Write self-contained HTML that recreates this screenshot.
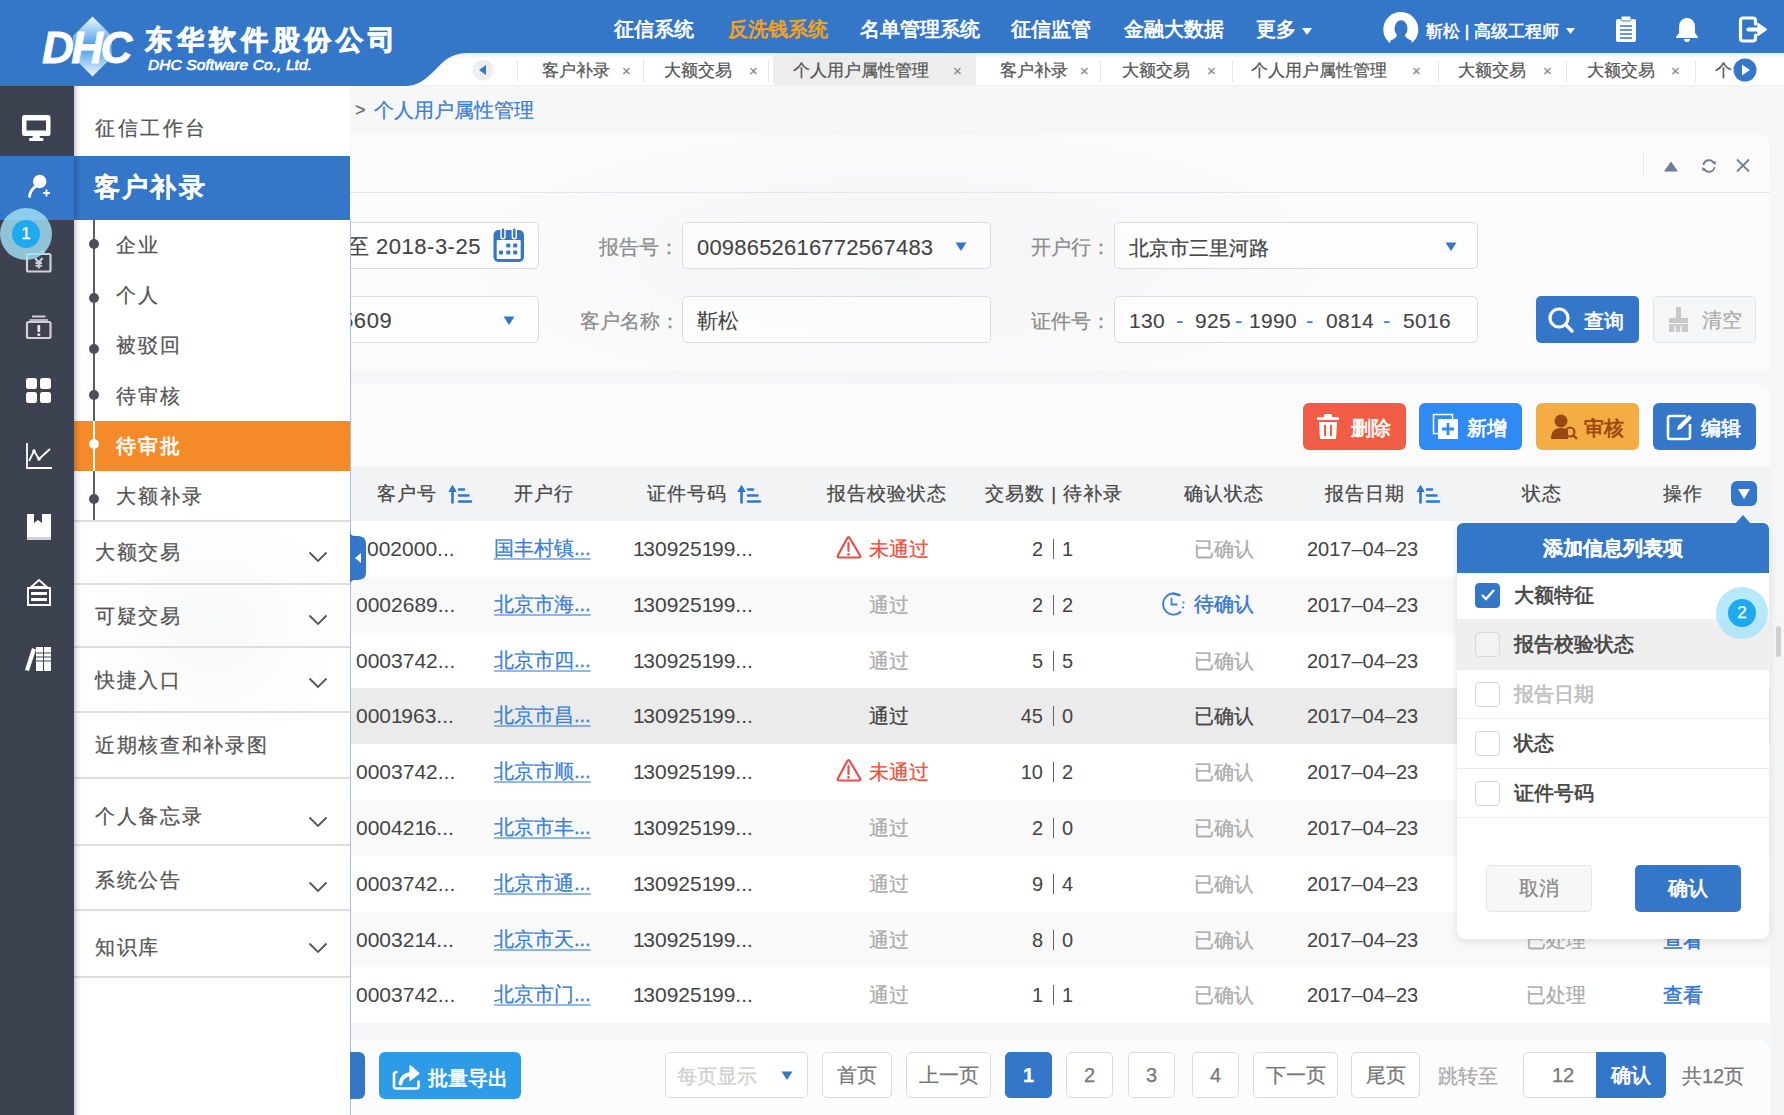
<!DOCTYPE html><html><head><meta charset="utf-8"><style>
*{box-sizing:border-box;margin:0;padding:0}
html,body{width:1784px;height:1115px;overflow:hidden}
body{font-family:"Liberation Sans",sans-serif;background:#f4f5f7;position:relative;color:#4a4a4a;-webkit-text-stroke:0.25px currentColor}
.a{position:absolute;white-space:nowrap}
.nav{top:17px;font-size:20px;color:#fff;line-height:24px;-webkit-text-stroke:0.75px currentColor}
.tab{top:60px;font-size:17px;color:#555;line-height:22px}
.tx{top:60px;font-size:15px;color:#8a8a8a;line-height:22px}
.tsep{top:60px;width:1px;height:22px;background:#e8e8e8}
.mi{font-size:20px;color:#555;line-height:24px;letter-spacing:1.7px}
.msep{left:74px;width:276px;height:2px;background:#dedede}
.sub{font-size:20px;color:#555;line-height:24px;letter-spacing:2px}
.dot{left:89px;width:10px;height:10px;border-radius:5px;background:#4b4f5a}
.chev{left:308px}
.lbl{font-size:20px;color:#8c8c8c;line-height:24px}
.inp{background:rgba(255,255,255,0.6);border:1px solid #dcdcdc;border-radius:5px;height:47px}
.val{font-size:22px;color:#444;line-height:26px;-webkit-text-stroke:0.1px}
.th{top:482px;font-size:19px;color:#474747;line-height:24px;letter-spacing:1px}
.td{font-size:21px;color:#444;line-height:26px;-webkit-text-stroke:0}
.lnk{font-size:20px;color:#3a7fd5;line-height:24px;text-decoration:underline;text-decoration-color:rgba(58,127,213,0.55);text-underline-offset:3px}
.gr{font-size:20px;color:#ababab;line-height:24px}
.btn{top:403px;height:47px;border-radius:6px;color:#fff;font-size:20px;font-weight:bold;line-height:47px}
.pg{top:1052px;height:46px;border:1px solid #dcdcdc;border-radius:5px;background:#fff;font-size:20px;color:#777;line-height:44px;text-align:center}
.pi{font-size:20px;color:#555;line-height:24px;-webkit-text-stroke:0.6px currentColor}
.cb{left:1475px;width:25px;height:25px;border:1px solid #d8d8d8;border-radius:4px;background:#fff}
.psep{left:1457px;width:312px;height:1px;background:#ececec}
</style></head><body>
<div class="a" style="left:350px;top:87px;width:1434px;height:1028px;background:linear-gradient(180deg,#f7f7f8,#f3f4f6)"></div>
<div class="a" style="left:350px;top:135px;width:1420px;height:236px;background:#fbfbfc;border-radius:0 9px 9px 0;box-shadow:0 0 2px rgba(0,0,0,0.03)"></div>
<div class="a" style="left:450px;top:120px;width:900px;height:280px;background:radial-gradient(closest-side,rgba(90,100,120,0.045),rgba(90,100,120,0))"></div>
<div class="a" style="left:350px;top:192px;width:1420px;height:1px;background:#e6e7ea"></div>
<div class="a" style="left:350px;top:385px;width:1420px;height:655px;background:#fbfbfc;border-radius:0 9px 0 0"></div>
<div class="a" style="left:350px;top:1040px;width:1420px;height:75px;background:#fcfcfd;border-radius:0 9px 0 0"></div>
<div class="a" style="left:355px;top:98px;font-size:18px;color:#666;line-height:24px">&gt;</div>
<div class="a" style="left:374px;top:97px;font-size:20px;color:#3a7fd5;line-height:26px">个人用户属性管理</div>
<div class="a" style="left:1643px;top:152px;width:1px;height:24px;background:#e6e6e6"></div>
<svg class="a" style="left:1663px;top:160px" width="16" height="13"><path d="M1 11.5H15L8 1.5Z" fill="#6f7e94"/></svg>
<svg class="a" style="left:1700px;top:157px" width="18" height="18"><path d="M3.5 8A5.5 5.5 0 0 1 14 6.5M14.5 10A5.5 5.5 0 0 1 4 11.5" fill="none" stroke="#6f7e94" stroke-width="1.8"/><path d="M12 5.5L15.5 8L16 4Z" fill="#6f7e94"/><path d="M6 12.5L2.5 10L2 14Z" fill="#6f7e94"/></svg>
<svg class="a" style="left:1735px;top:158px" width="16" height="15"><path d="M2 1.5L14 13.5M14 1.5L2 13.5" stroke="#6f7e94" stroke-width="1.8"/></svg>
<div class="a inp" style="left:300px;top:222px;width:239px"></div>
<div class="a inp" style="left:682px;top:222px;width:309px"></div>
<div class="a inp" style="left:1114px;top:222px;width:364px"></div>
<div class="a inp" style="left:300px;top:296px;width:239px"></div>
<div class="a inp" style="left:682px;top:296px;width:309px"></div>
<div class="a inp" style="left:1114px;top:296px;width:364px"></div>
<div class="a val" style="left:347px;top:234px;letter-spacing:0.5px">至 2018-3-25</div>
<svg class="a" style="left:493px;top:227px" width="32" height="36"><rect x="0.5" y="3" width="30.5" height="32" rx="5" fill="#3476c8"/><rect x="3.7" y="13" width="24" height="19" rx="1" fill="#fbfbfc"/><rect x="7.3" y="0.5" width="5.4" height="12" rx="2.7" fill="#fbfbfc"/><rect x="18.6" y="0.5" width="5.4" height="12" rx="2.7" fill="#fbfbfc"/><rect x="8.8" y="1.5" width="2.4" height="9.5" rx="1.2" fill="#3476c8"/><rect x="20.1" y="1.5" width="2.4" height="9.5" rx="1.2" fill="#3476c8"/><rect x="13.3" y="16.6" width="4" height="4" rx="1" fill="#3476c8"/><rect x="20.2" y="16.6" width="4" height="4" rx="1" fill="#3476c8"/><rect x="6" y="23.5" width="4" height="4" rx="1" fill="#3476c8"/><rect x="13.3" y="23.5" width="4" height="4" rx="1" fill="#3476c8"/><rect x="20.2" y="23.5" width="4" height="4" rx="1" fill="#3476c8"/></svg>
<div class="a val" style="left:341px;top:308px;letter-spacing:0.6px">5609</div>
<svg class="a" style="left:503px;top:316px" width="12" height="10"><path d="M0.5 0.5H11.5L6 9Z" fill="#3476c8"/></svg>
<div class="a lbl" style="left:599px;top:235px">报告号：</div>
<div class="a val" style="left:697px;top:235px;letter-spacing:0.2px">0098652616772567483</div>
<svg class="a" style="left:955px;top:242px" width="12" height="10"><path d="M0.5 0.5H11.5L6 9Z" fill="#3476c8"/></svg>
<div class="a lbl" style="left:1031px;top:235px">开户行：</div>
<div class="a val" style="left:1129px;top:235px;font-size:20px;-webkit-text-stroke:0.25px">北京市三里河路</div>
<svg class="a" style="left:1445px;top:242px" width="12" height="10"><path d="M0.5 0.5H11.5L6 9Z" fill="#3476c8"/></svg>
<div class="a lbl" style="left:580px;top:309px">客户名称：</div>
<div class="a val" style="left:697px;top:308px;font-size:21px">靳松</div>
<div class="a lbl" style="left:1031px;top:309px">证件号：</div>
<div class="a val" style="left:1129px;top:308px;font-size:21px;letter-spacing:0.3px">130</div>
<div class="a val" style="left:1195px;top:308px;font-size:21px;letter-spacing:0.3px">925</div>
<div class="a val" style="left:1249px;top:308px;font-size:21px;letter-spacing:0.3px">1990</div>
<div class="a val" style="left:1326px;top:308px;font-size:21px;letter-spacing:0.3px">0814</div>
<div class="a val" style="left:1403px;top:308px;font-size:21px;letter-spacing:0.3px">5016</div>
<div class="a val" style="left:1176px;top:308px;color:#3a7fd5">-</div>
<div class="a val" style="left:1235px;top:308px;color:#3a7fd5">-</div>
<div class="a val" style="left:1306px;top:308px;color:#3a7fd5">-</div>
<div class="a val" style="left:1383px;top:308px;color:#3a7fd5">-</div>
<div class="a" style="left:1536px;top:296px;width:103px;height:47px;border-radius:5px;background:#3476c8"></div>
<svg class="a" style="left:1547px;top:306px" width="28" height="28"><circle cx="12" cy="12" r="9" fill="none" stroke="#fff" stroke-width="3.2"/><path d="M18.5 18.5L25 25" stroke="#fff" stroke-width="3.5" stroke-linecap="round"/></svg>
<div class="a" style="left:1584px;top:308px;font-size:20px;color:#fff;line-height:26px;-webkit-text-stroke:0.7px #fff">查询</div>
<div class="a" style="left:1653px;top:296px;width:103px;height:47px;border-radius:5px;background:#f5f6f8;border:1px solid #e2e3e6"></div>
<svg class="a" style="left:1667px;top:306px" width="24" height="28"><rect x="9" y="1" width="5" height="11" fill="#c8c8c8"/><rect x="2" y="12" width="19" height="5" fill="#c8c8c8"/><path d="M2 18H21V26H2Z" fill="#c8c8c8"/><path d="M8 20V26M14 20V26" stroke="#f5f6f8" stroke-width="1.5"/></svg>
<div class="a" style="left:1702px;top:307px;font-size:20px;color:#aaa;line-height:26px">清空</div>
<div class="a btn" style="left:1303px;width:103px;background:#f15c45"></div>
<div class="a" style="left:1351px;top:415px;font-size:20px;color:#fff;line-height:26px;-webkit-text-stroke:0.7px #fff">删除</div>
<div class="a btn" style="left:1419px;width:103px;background:#2f8bf3"></div>
<div class="a" style="left:1467px;top:415px;font-size:20px;color:#fff;line-height:26px;-webkit-text-stroke:0.7px #fff">新增</div>
<div class="a btn" style="left:1536px;width:103px;background:#f4ad42"></div>
<div class="a" style="left:1584px;top:415px;font-size:20px;color:#9b4711;line-height:26px;-webkit-text-stroke:0.7px #9b4711">审核</div>
<div class="a btn" style="left:1653px;width:103px;background:#3476c8"></div>
<div class="a" style="left:1701px;top:415px;font-size:20px;color:#fff;line-height:26px;-webkit-text-stroke:0.7px #fff">编辑</div>
<svg class="a" style="left:1316px;top:414px" width="24" height="26"><rect x="1" y="3" width="22" height="3" rx="1" fill="#fff"/><rect x="8" y="0" width="8" height="4" rx="1" fill="#fff"/><path d="M3 8H21L20 25H4Z" fill="#fff"/><path d="M9 11V22M15 11V22" stroke="#f15c45" stroke-width="2"/></svg>
<svg class="a" style="left:1432px;top:413px" width="28" height="28"><rect x="1.5" y="1.5" width="19" height="19" fill="none" stroke="#fff" stroke-width="1.5"/><rect x="6" y="6" width="20" height="20" fill="#fff"/><path d="M16 10V22M10 16H22" stroke="#2f8bf3" stroke-width="2.8"/></svg>
<svg class="a" style="left:1550px;top:413px" width="30" height="28"><circle cx="11" cy="8" r="6.5" fill="#9b4711"/><path d="M1 26C1 18 5 15 11 15C15 15 17 16 18 17V26Z" fill="#9b4711"/><circle cx="20" cy="19" r="4.5" fill="none" stroke="#9b4711" stroke-width="2.2"/><path d="M23 22L27 26" stroke="#9b4711" stroke-width="2.4"/></svg>
<svg class="a" style="left:1666px;top:413px" width="28" height="28"><path d="M20 3H4A2 2 0 0 0 2 5V24A2 2 0 0 0 4 26H22A2 2 0 0 0 24 24V11" fill="none" stroke="#fff" stroke-width="2.6"/><path d="M11 17L12 13L23 2L26 5L15 16Z" fill="#fff"/></svg>
<div class="a" style="left:350px;top:467px;width:1420px;height:54px;background:#f2f3f4"></div>
<div class="a th" style="left:377px">客户号</div>
<div class="a th" style="left:514px">开户行</div>
<div class="a th" style="left:647px">证件号码</div>
<div class="a th" style="left:827px">报告校验状态</div>
<div class="a th" style="left:985px">交易数 | 待补录</div>
<div class="a th" style="left:1184px">确认状态</div>
<div class="a th" style="left:1325px">报告日期</div>
<div class="a th" style="left:1522px">状态</div>
<div class="a th" style="left:1663px">操作</div>
<svg class="a" style="left:448px;top:484px" width="26" height="22"><path d="M4.5 4V18.5" stroke="#2f78d2" stroke-width="2.6" stroke-linecap="round"/><path d="M1 7.5L4.5 1.5L8 7.5Z" fill="#2f78d2" stroke="#2f78d2" stroke-width="1" stroke-linejoin="round"/><path d="M11 5.5H16M11 11.5H20.5M11 17.5H23" stroke="#2f78d2" stroke-width="2.6" stroke-linecap="round"/></svg>
<svg class="a" style="left:737px;top:484px" width="26" height="22"><path d="M4.5 4V18.5" stroke="#2f78d2" stroke-width="2.6" stroke-linecap="round"/><path d="M1 7.5L4.5 1.5L8 7.5Z" fill="#2f78d2" stroke="#2f78d2" stroke-width="1" stroke-linejoin="round"/><path d="M11 5.5H16M11 11.5H20.5M11 17.5H23" stroke="#2f78d2" stroke-width="2.6" stroke-linecap="round"/></svg>
<svg class="a" style="left:1416px;top:484px" width="26" height="22"><path d="M4.5 4V18.5" stroke="#2f78d2" stroke-width="2.6" stroke-linecap="round"/><path d="M1 7.5L4.5 1.5L8 7.5Z" fill="#2f78d2" stroke="#2f78d2" stroke-width="1" stroke-linejoin="round"/><path d="M11 5.5H16M11 11.5H20.5M11 17.5H23" stroke="#2f78d2" stroke-width="2.6" stroke-linecap="round"/></svg>
<div class="a" style="left:1731px;top:481px;width:26px;height:25px;border-radius:6px;background:#3476c8"></div>
<svg class="a" style="left:1737px;top:488px" width="14" height="12"><path d="M1 1H13L7 11Z" fill="#fff"/></svg>
<div class="a" style="left:350px;top:521.0px;width:1420px;height:56.1px;background:#ffffff"></div>
<div class="a td" style="left:367px;top:535.9px">002000...</div>
<div class="a lnk" style="left:494px;top:535.9px">国丰村镇...</div>
<div class="a td" style="left:633px;top:535.9px"><span style="letter-spacing:-1.4px">1</span>30925<span style="letter-spacing:-1.4px">1</span>99...</div>
<svg class="a" style="left:835px;top:533.9px" width="28" height="26"><path d="M12.2 4.2Q13.5 2 14.8 4.2L25 21.2Q26.2 23.5 23.6 23.5H4.4Q1.8 23.5 3 21.2Z" fill="none" stroke="#e5504a" stroke-width="2.2" stroke-linejoin="round"/><path d="M13.5 9V17" stroke="#e5504a" stroke-width="2.2" stroke-linecap="round"/><circle cx="13.5" cy="20.4" r="1.3" fill="#e5504a"/></svg>
<div class="a" style="left:869px;top:535.9px;font-size:20px;color:#f04e3a;line-height:26px">未通过</div>
<div class="a td" style="left:963px;top:535.9px;width:80px;text-align:right;font-size:20px">2</div>
<div class="a" style="left:1052.5px;top:538.9px;width:1.6px;height:20px;background:#666"></div>
<div class="a td" style="left:1062px;top:535.9px;font-size:20px">1</div>
<div class="a" style="left:1194px;top:535.9px;font-size:20px;color:#ababab;line-height:26px">已确认</div>
<div class="a td" style="left:1307px;top:535.9px;font-size:20px">2017–04–23</div>
<div class="a" style="left:1526px;top:535.9px;font-size:20px;color:#ababab;line-height:26px">已处理</div>
<div class="a" style="left:1663px;top:535.9px;font-size:20px;color:#3576d0;line-height:26px;-webkit-text-stroke:0.5px #3576d0">查看</div>
<div class="a" style="left:350px;top:576.8px;width:1420px;height:56.1px;background:#f9f9fa"></div>
<div class="a td" style="left:356px;top:591.7px">0002689...</div>
<div class="a lnk" style="left:494px;top:591.7px">北京市海...</div>
<div class="a td" style="left:633px;top:591.7px"><span style="letter-spacing:-1.4px">1</span>30925<span style="letter-spacing:-1.4px">1</span>99...</div>
<div class="a" style="left:869px;top:591.7px;font-size:20px;color:#ababab;line-height:26px">通过</div>
<div class="a td" style="left:963px;top:591.7px;width:80px;text-align:right;font-size:20px">2</div>
<div class="a" style="left:1052.5px;top:594.7px;width:1.6px;height:20px;background:#666"></div>
<div class="a td" style="left:1062px;top:591.7px;font-size:20px">2</div>
<svg class="a" style="left:1160px;top:590.7px" width="26" height="26"><path d="M13.5 2.5A10.5 10.5 0 1 0 21 20.5" fill="none" stroke="#3a7fd5" stroke-width="1.8"/><path d="M13.5 2.5L19.5 4.2" stroke="#3a7fd5" stroke-width="2.4" stroke-linecap="round"/><path d="M11.5 7V13.5H17.5" fill="none" stroke="#3a7fd5" stroke-width="1.8"/><circle cx="23.5" cy="11.5" r="1.1" fill="#3a7fd5"/><circle cx="23" cy="16.5" r="1.1" fill="#3a7fd5"/></svg>
<div class="a" style="left:1194px;top:590.7px;font-size:20px;color:#3576d0;line-height:26px;-webkit-text-stroke:0.4px #3576d0">待确认</div>
<div class="a td" style="left:1307px;top:591.7px;font-size:20px">2017–04–23</div>
<div class="a" style="left:1526px;top:591.7px;font-size:20px;color:#ababab;line-height:26px">已处理</div>
<div class="a" style="left:1663px;top:591.7px;font-size:20px;color:#3576d0;line-height:26px;-webkit-text-stroke:0.5px #3576d0">查看</div>
<div class="a" style="left:350px;top:632.6px;width:1420px;height:56.1px;background:#ffffff"></div>
<div class="a td" style="left:356px;top:647.5px">0003742...</div>
<div class="a lnk" style="left:494px;top:647.5px">北京市四...</div>
<div class="a td" style="left:633px;top:647.5px"><span style="letter-spacing:-1.4px">1</span>30925<span style="letter-spacing:-1.4px">1</span>99...</div>
<div class="a" style="left:869px;top:647.5px;font-size:20px;color:#ababab;line-height:26px">通过</div>
<div class="a td" style="left:963px;top:647.5px;width:80px;text-align:right;font-size:20px">5</div>
<div class="a" style="left:1052.5px;top:650.5px;width:1.6px;height:20px;background:#666"></div>
<div class="a td" style="left:1062px;top:647.5px;font-size:20px">5</div>
<div class="a" style="left:1194px;top:647.5px;font-size:20px;color:#ababab;line-height:26px">已确认</div>
<div class="a td" style="left:1307px;top:647.5px;font-size:20px">2017–04–23</div>
<div class="a" style="left:1526px;top:647.5px;font-size:20px;color:#ababab;line-height:26px">已处理</div>
<div class="a" style="left:1663px;top:647.5px;font-size:20px;color:#3576d0;line-height:26px;-webkit-text-stroke:0.5px #3576d0">查看</div>
<div class="a" style="left:350px;top:688.4px;width:1420px;height:56.1px;background:#ebebeb"></div>
<div class="a td" style="left:356px;top:703.3px">000<span style="letter-spacing:-1.4px">1</span>963...</div>
<div class="a lnk" style="left:494px;top:703.3px">北京市昌...</div>
<div class="a td" style="left:633px;top:703.3px"><span style="letter-spacing:-1.4px">1</span>30925<span style="letter-spacing:-1.4px">1</span>99...</div>
<div class="a" style="left:869px;top:703.3px;font-size:20px;color:#444;line-height:26px">通过</div>
<div class="a td" style="left:963px;top:703.3px;width:80px;text-align:right;font-size:20px">45</div>
<div class="a" style="left:1052.5px;top:706.3px;width:1.6px;height:20px;background:#666"></div>
<div class="a td" style="left:1062px;top:703.3px;font-size:20px">0</div>
<div class="a" style="left:1194px;top:703.3px;font-size:20px;color:#444;line-height:26px">已确认</div>
<div class="a td" style="left:1307px;top:703.3px;font-size:20px">2017–04–23</div>
<div class="a" style="left:1526px;top:703.3px;font-size:20px;color:#ababab;line-height:26px">已处理</div>
<div class="a" style="left:1663px;top:703.3px;font-size:20px;color:#3576d0;line-height:26px;-webkit-text-stroke:0.5px #3576d0">查看</div>
<div class="a" style="left:350px;top:744.2px;width:1420px;height:56.1px;background:#ffffff"></div>
<div class="a td" style="left:356px;top:759.1px">0003742...</div>
<div class="a lnk" style="left:494px;top:759.1px">北京市顺...</div>
<div class="a td" style="left:633px;top:759.1px"><span style="letter-spacing:-1.4px">1</span>30925<span style="letter-spacing:-1.4px">1</span>99...</div>
<svg class="a" style="left:835px;top:757.1px" width="28" height="26"><path d="M12.2 4.2Q13.5 2 14.8 4.2L25 21.2Q26.2 23.5 23.6 23.5H4.4Q1.8 23.5 3 21.2Z" fill="none" stroke="#e5504a" stroke-width="2.2" stroke-linejoin="round"/><path d="M13.5 9V17" stroke="#e5504a" stroke-width="2.2" stroke-linecap="round"/><circle cx="13.5" cy="20.4" r="1.3" fill="#e5504a"/></svg>
<div class="a" style="left:869px;top:759.1px;font-size:20px;color:#f04e3a;line-height:26px">未通过</div>
<div class="a td" style="left:963px;top:759.1px;width:80px;text-align:right;font-size:20px">10</div>
<div class="a" style="left:1052.5px;top:762.1px;width:1.6px;height:20px;background:#666"></div>
<div class="a td" style="left:1062px;top:759.1px;font-size:20px">2</div>
<div class="a" style="left:1194px;top:759.1px;font-size:20px;color:#ababab;line-height:26px">已确认</div>
<div class="a td" style="left:1307px;top:759.1px;font-size:20px">2017–04–23</div>
<div class="a" style="left:1526px;top:759.1px;font-size:20px;color:#ababab;line-height:26px">已处理</div>
<div class="a" style="left:1663px;top:759.1px;font-size:20px;color:#3576d0;line-height:26px;-webkit-text-stroke:0.5px #3576d0">查看</div>
<div class="a" style="left:350px;top:800.0px;width:1420px;height:56.1px;background:#f9f9fa"></div>
<div class="a td" style="left:356px;top:814.9px">00042<span style="letter-spacing:-1.4px">1</span>6...</div>
<div class="a lnk" style="left:494px;top:814.9px">北京市丰...</div>
<div class="a td" style="left:633px;top:814.9px"><span style="letter-spacing:-1.4px">1</span>30925<span style="letter-spacing:-1.4px">1</span>99...</div>
<div class="a" style="left:869px;top:814.9px;font-size:20px;color:#ababab;line-height:26px">通过</div>
<div class="a td" style="left:963px;top:814.9px;width:80px;text-align:right;font-size:20px">2</div>
<div class="a" style="left:1052.5px;top:817.9px;width:1.6px;height:20px;background:#666"></div>
<div class="a td" style="left:1062px;top:814.9px;font-size:20px">0</div>
<div class="a" style="left:1194px;top:814.9px;font-size:20px;color:#ababab;line-height:26px">已确认</div>
<div class="a td" style="left:1307px;top:814.9px;font-size:20px">2017–04–23</div>
<div class="a" style="left:1526px;top:814.9px;font-size:20px;color:#ababab;line-height:26px">已处理</div>
<div class="a" style="left:1663px;top:814.9px;font-size:20px;color:#3576d0;line-height:26px;-webkit-text-stroke:0.5px #3576d0">查看</div>
<div class="a" style="left:350px;top:855.8px;width:1420px;height:56.1px;background:#ffffff"></div>
<div class="a td" style="left:356px;top:870.7px">0003742...</div>
<div class="a lnk" style="left:494px;top:870.7px">北京市通...</div>
<div class="a td" style="left:633px;top:870.7px"><span style="letter-spacing:-1.4px">1</span>30925<span style="letter-spacing:-1.4px">1</span>99...</div>
<div class="a" style="left:869px;top:870.7px;font-size:20px;color:#ababab;line-height:26px">通过</div>
<div class="a td" style="left:963px;top:870.7px;width:80px;text-align:right;font-size:20px">9</div>
<div class="a" style="left:1052.5px;top:873.7px;width:1.6px;height:20px;background:#666"></div>
<div class="a td" style="left:1062px;top:870.7px;font-size:20px">4</div>
<div class="a" style="left:1194px;top:870.7px;font-size:20px;color:#ababab;line-height:26px">已确认</div>
<div class="a td" style="left:1307px;top:870.7px;font-size:20px">2017–04–23</div>
<div class="a" style="left:1526px;top:870.7px;font-size:20px;color:#ababab;line-height:26px">已处理</div>
<div class="a" style="left:1663px;top:870.7px;font-size:20px;color:#3576d0;line-height:26px;-webkit-text-stroke:0.5px #3576d0">查看</div>
<div class="a" style="left:350px;top:911.6px;width:1420px;height:56.1px;background:#f9f9fa"></div>
<div class="a td" style="left:356px;top:926.5px">00032<span style="letter-spacing:-1.4px">1</span>4...</div>
<div class="a lnk" style="left:494px;top:926.5px">北京市天...</div>
<div class="a td" style="left:633px;top:926.5px"><span style="letter-spacing:-1.4px">1</span>30925<span style="letter-spacing:-1.4px">1</span>99...</div>
<div class="a" style="left:869px;top:926.5px;font-size:20px;color:#ababab;line-height:26px">通过</div>
<div class="a td" style="left:963px;top:926.5px;width:80px;text-align:right;font-size:20px">8</div>
<div class="a" style="left:1052.5px;top:929.5px;width:1.6px;height:20px;background:#666"></div>
<div class="a td" style="left:1062px;top:926.5px;font-size:20px">0</div>
<div class="a" style="left:1194px;top:926.5px;font-size:20px;color:#ababab;line-height:26px">已确认</div>
<div class="a td" style="left:1307px;top:926.5px;font-size:20px">2017–04–23</div>
<div class="a" style="left:1526px;top:926.5px;font-size:20px;color:#ababab;line-height:26px">已处理</div>
<div class="a" style="left:1663px;top:926.5px;font-size:20px;color:#3576d0;line-height:26px;-webkit-text-stroke:0.5px #3576d0">查看</div>
<div class="a" style="left:350px;top:967.4px;width:1420px;height:56.1px;background:#ffffff"></div>
<div class="a td" style="left:356px;top:982.3px">0003742...</div>
<div class="a lnk" style="left:494px;top:982.3px">北京市门...</div>
<div class="a td" style="left:633px;top:982.3px"><span style="letter-spacing:-1.4px">1</span>30925<span style="letter-spacing:-1.4px">1</span>99...</div>
<div class="a" style="left:869px;top:982.3px;font-size:20px;color:#ababab;line-height:26px">通过</div>
<div class="a td" style="left:963px;top:982.3px;width:80px;text-align:right;font-size:20px">1</div>
<div class="a" style="left:1052.5px;top:985.3px;width:1.6px;height:20px;background:#666"></div>
<div class="a td" style="left:1062px;top:982.3px;font-size:20px">1</div>
<div class="a" style="left:1194px;top:982.3px;font-size:20px;color:#ababab;line-height:26px">已确认</div>
<div class="a td" style="left:1307px;top:982.3px;font-size:20px">2017–04–23</div>
<div class="a" style="left:1526px;top:982.3px;font-size:20px;color:#ababab;line-height:26px">已处理</div>
<div class="a" style="left:1663px;top:982.3px;font-size:20px;color:#3576d0;line-height:26px;-webkit-text-stroke:0.5px #3576d0">查看</div>
<div class="a" style="left:350px;top:1023px;width:1420px;height:17px;background:#f6f7f9"></div>
<div class="a" style="left:350px;top:220px;width:1px;height:895px;background:#9fc0ea"></div>
<svg class="a" style="left:350px;top:530px" width="18" height="56"><path d="M0 0C0 5 2 6 6 6C13 6 16 8 16 14V42C16 48 13 50 6 50C2 50 0 51 0 56Z" fill="#3476c8"/><path d="M11 23V33L5 28Z" fill="#fff"/></svg>
<div class="a" style="left:330px;top:1052px;width:35px;height:47px;border-radius:6px;background:#3476c8"></div>
<div class="a" style="left:379px;top:1052px;width:142px;height:47px;border-radius:6px;background:#2d9be6"></div>
<svg class="a" style="left:391px;top:1062px" width="30" height="30"><path d="M5.5 10Q3 10 3 12.5V24.5Q3 26.5 5 26.5H25.5Q27.5 26.5 27.5 24.5V19.5" fill="none" stroke="#fff" stroke-width="2.6" stroke-linecap="round"/><path d="M9.5 21.5C10.5 15.5 14 12.3 20 12" fill="none" stroke="#fff" stroke-width="4" stroke-linecap="round"/><path d="M19 3.5L28 11.5L19 18.5Z" fill="#fff" stroke="#fff" stroke-width="1.2" stroke-linejoin="round"/></svg>
<div class="a" style="left:428px;top:1065px;font-size:20px;color:#fff;line-height:26px;-webkit-text-stroke:0.7px #fff">批量导出</div>
<div class="a pg" style="left:665px;width:143px"></div>
<div class="a" style="left:677px;top:1063px;font-size:20px;color:#cfcfcf;line-height:26px">每页显示</div>
<svg class="a" style="left:781px;top:1071px" width="12" height="10"><path d="M0.5 0.5H11.5L6 9Z" fill="#3476c8"/></svg>
<div class="a pg" style="left:822px;width:70px">首页</div>
<div class="a pg" style="left:906px;width:85px">上一页</div>
<div class="a pg" style="left:1066px;width:47px">2</div>
<div class="a pg" style="left:1128px;width:47px">3</div>
<div class="a pg" style="left:1192px;width:47px">4</div>
<div class="a pg" style="left:1253px;width:85px">下一页</div>
<div class="a pg" style="left:1351px;width:69px">尾页</div>
<div class="a pg" style="left:1005px;width:47px;background:#3476c8;border-color:#3476c8;color:#fff;font-weight:bold">1</div>
<div class="a" style="left:1438px;top:1063px;font-size:20px;color:#aaa;line-height:26px">跳转至</div>
<div class="a pg" style="left:1523px;width:80px;border-radius:5px 0 0 5px">12</div>
<div class="a pg" style="left:1596px;width:70px;background:#3476c8;border-color:#3476c8;color:#fff;-webkit-text-stroke:0.7px #fff;border-radius:0 5px 5px 0">确认</div>
<div class="a" style="left:1682px;top:1063px;font-size:20px;color:#777;line-height:26px">共12页</div>
<div class="a" style="left:0;top:86px;width:74px;height:1029px;background:#3d4250"></div>
<div class="a" style="left:0;top:156px;width:74px;height:64px;background:#3476c8"></div>
<div class="a" style="left:74px;top:86px;width:276px;height:1029px;background:#fff"></div>
<div class="a" style="left:74px;top:500px;width:276px;height:260px;background:radial-gradient(closest-side,rgba(90,100,120,0.045),rgba(90,100,120,0))"></div>
<div class="a" style="left:74px;top:156px;width:276px;height:64px;background:#3476c8"></div>
<div class="a mi" style="left:95px;top:116px;letter-spacing:2.6px">征信工作台</div>
<div class="a" style="left:94px;top:171px;font-size:26px;font-weight:bold;color:#fff;line-height:32px;letter-spacing:2.2px">客户补录</div>
<div class="a" style="left:74px;top:421px;width:276px;height:50px;background:#f58a28"></div>
<div class="a" style="left:93px;top:220px;width:2px;height:301px;background:#5b5f69"></div>
<div class="a" style="left:93px;top:421px;width:2px;height:50px;background:#fff"></div>
<div class="a dot" style="top:239px;"></div>
<div class="a sub" style="left:116px;top:233px;">企业</div>
<div class="a dot" style="top:293px;"></div>
<div class="a sub" style="left:116px;top:283px;">个人</div>
<div class="a dot" style="top:344px;"></div>
<div class="a sub" style="left:116px;top:333px;">被驳回</div>
<div class="a dot" style="top:390px;"></div>
<div class="a sub" style="left:116px;top:384px;">待审核</div>
<div class="a dot" style="top:439px;background:#fff"></div>
<div class="a sub" style="left:116px;top:434px;color:#fff;-webkit-text-stroke:0.7px #fff">待审批</div>
<div class="a dot" style="top:494px;"></div>
<div class="a sub" style="left:116px;top:484px;">大额补录</div>
<div class="a msep" style="top:520px"></div>
<div class="a msep" style="top:583px"></div>
<div class="a msep" style="top:646px"></div>
<div class="a msep" style="top:711px"></div>
<div class="a msep" style="top:777px"></div>
<div class="a msep" style="top:844px"></div>
<div class="a msep" style="top:909px"></div>
<div class="a msep" style="top:976px"></div>
<div class="a mi" style="left:95px;top:540px">大额交易</div>
<svg class="a chev" style="top:551px" width="20" height="12"><path d="M1.5 1.5L10 10L18.5 1.5" fill="none" stroke="#555" stroke-width="1.8"/></svg>
<div class="a mi" style="left:95px;top:604px">可疑交易</div>
<svg class="a chev" style="top:614px" width="20" height="12"><path d="M1.5 1.5L10 10L18.5 1.5" fill="none" stroke="#555" stroke-width="1.8"/></svg>
<div class="a mi" style="left:95px;top:668px">快捷入口</div>
<svg class="a chev" style="top:677px" width="20" height="12"><path d="M1.5 1.5L10 10L18.5 1.5" fill="none" stroke="#555" stroke-width="1.8"/></svg>
<div class="a mi" style="left:95px;top:733px">近期核查和补录图</div>
<div class="a mi" style="left:95px;top:804px">个人备忘录</div>
<svg class="a chev" style="top:816px" width="20" height="12"><path d="M1.5 1.5L10 10L18.5 1.5" fill="none" stroke="#555" stroke-width="1.8"/></svg>
<div class="a mi" style="left:95px;top:868px">系统公告</div>
<svg class="a chev" style="top:881px" width="20" height="12"><path d="M1.5 1.5L10 10L18.5 1.5" fill="none" stroke="#555" stroke-width="1.8"/></svg>
<div class="a mi" style="left:95px;top:935px">知识库</div>
<svg class="a chev" style="top:942px" width="20" height="12"><path d="M1.5 1.5L10 10L18.5 1.5" fill="none" stroke="#555" stroke-width="1.8"/></svg>
<div class="a" style="left:74px;top:86px;width:8px;height:1029px;background:linear-gradient(90deg,rgba(0,0,0,0.2),rgba(0,0,0,0.07) 3px,rgba(0,0,0,0) 7px)"></div>
<div class="a" style="left:22px;top:115px;width:32px;height:32px"><svg width="30" height="28"><path d="M2.5 0H26A2.5 2.5 0 0 1 28.5 2.5V18.5A2.5 2.5 0 0 1 26 21H2.5A2.5 2.5 0 0 1 0 18.5V2.5A2.5 2.5 0 0 1 2.5 0ZM4.5 5.5V15.5H24V5.5Z" fill="#fff" fill-rule="evenodd"/><path d="M11 21H17.5L18.5 23.5H10Z" fill="#fff"/><rect x="7" y="23" width="14.5" height="3" rx="1.2" fill="#fff"/></svg></div>
<div class="a" style="left:26px;top:172px;width:32px;height:32px"><svg width="28" height="28"><circle cx="13.7" cy="9.5" r="6.7" fill="#fff"/><path d="M9.5 14.5C6 17 4 20 3.5 24.5" fill="none" stroke="#fff" stroke-width="2.8" stroke-linecap="round"/><path d="M17 21H24M20.5 17.5V24.5" stroke="#fff" stroke-width="1.8"/></svg></div>
<div class="a" style="left:24px;top:247px;width:32px;height:32px"><svg width="30" height="28"><path d="M16 4.5H21" stroke="#cdd0d6" stroke-width="1.5"/><rect x="3" y="7" width="23.5" height="17.5" rx="1.5" fill="none" stroke="#cdd0d6" stroke-width="2.2"/><path d="M11 11L14.8 15.5L18.5 11M14.8 15.5V21.5M11.5 16H18M11.5 18.8H18" fill="none" stroke="#cdd0d6" stroke-width="2"/></svg></div>
<div class="a" style="left:24px;top:312px;width:32px;height:32px"><svg width="30" height="28"><path d="M8 4.5H21.5" stroke="#cdd0d6" stroke-width="2"/><path d="M5.5 8H24" stroke="#cdd0d6" stroke-width="1.6"/><rect x="3" y="10" width="23.5" height="16" rx="1.5" fill="none" stroke="#cdd0d6" stroke-width="2.2"/><rect x="13.4" y="13" width="2.8" height="7" rx="0.8" fill="#e8e9ec"/><rect x="13.4" y="21.5" width="2.8" height="2.4" fill="#e8e9ec"/></svg></div>
<div class="a" style="left:25px;top:377px;width:32px;height:32px"><svg width="28" height="28"><rect x="1" y="1" width="11" height="11" rx="2.5" fill="#fff"/><rect x="15" y="1" width="11" height="11" rx="2.5" fill="#fff"/><rect x="1" y="15" width="11" height="11" rx="2.5" fill="#fff"/><rect x="15" y="15" width="11" height="11" rx="2.5" fill="#fff"/></svg></div>
<div class="a" style="left:25px;top:442px;width:32px;height:32px"><svg width="28" height="28"><path d="M2 1V26H27" fill="none" stroke="#fff" stroke-width="1.8"/><path d="M4 19L9 9L14 17L25 7" fill="none" stroke="#fff" stroke-width="1.8"/><circle cx="9" cy="9" r="1.8" fill="#fff"/><circle cx="14" cy="17" r="1.8" fill="#fff"/></svg></div>
<div class="a" style="left:26px;top:513px;width:32px;height:32px"><svg width="26" height="28"><path d="M1 1H8V10L12 7L16 10V1H25V25H1Z" fill="#fff"/><rect x="1" y="24" width="24" height="3" fill="#cfd2d8"/></svg></div>
<div class="a" style="left:25px;top:578px;width:32px;height:32px"><svg width="28" height="30"><path d="M14 2L6 9H22Z" fill="none" stroke="#fff" stroke-width="1.8"/><rect x="3" y="10" width="22" height="17" fill="none" stroke="#fff" stroke-width="2"/><rect x="6" y="14" width="16" height="3" fill="#fff"/><rect x="6" y="20" width="16" height="3" fill="#fff"/></svg></div>
<div class="a" style="left:24px;top:645px;width:32px;height:32px"><svg width="30" height="28"><path d="M1 25L8 3L12 4.5L5 26Z" fill="#fff"/><rect x="12" y="2" width="7" height="24" fill="#fff"/><rect x="20" y="2" width="7" height="24" fill="#fff"/><path d="M12 8H27M12 12H27M12 16H27" stroke="#3d4250" stroke-width="1"/></svg></div>
<div class="a" style="left:0px;top:208px;width:52px;height:52px;border-radius:26px;background:rgba(165,226,250,0.8)"></div>
<div class="a" style="left:12px;top:220px;width:28px;height:28px;border-radius:14px;background:#1fa9ef;color:#fff;font-size:17px;line-height:28px;text-align:center">1</div>
<div class="a" style="left:0;top:0;width:1784px;height:53px;background:#3476c8"></div>
<div class="a" style="left:400px;top:53px;width:1384px;height:34px;background:#fff"></div>
<div class="a" style="left:400px;top:85px;width:1384px;height:2px;background:linear-gradient(#f0f0f0,#f6f6f6)"></div>
<div class="a" style="left:440px;top:53px;width:1344px;height:6px;background:linear-gradient(rgba(0,0,0,0.07),rgba(0,0,0,0))"></div>
<svg class="a" style="left:0;top:0" width="500" height="90"><path d="M0 0H500V53H470C452 53 446 59 436 69C425 80 418 86 404 86H0Z" fill="#3476c8"/></svg>
<svg class="a" style="left:30px;top:10px" width="380" height="75">
 <defs><linearGradient id="dg" x1="0" y1="0" x2="0" y2="1"><stop offset="0" stop-color="#f4f9ff"/><stop offset="0.5" stop-color="#3f9ae9"/><stop offset="1" stop-color="#f4f9ff"/></linearGradient></defs>
 <path d="M62.5 6.4L82 26V47L62.5 66.6L43 47V26Z" fill="url(#dg)"/>
 <text x="12" y="52.5" font-family="Liberation Sans" font-weight="bold" font-style="italic" font-size="44" fill="#fff" stroke="#fff" stroke-width="0.8" letter-spacing="-2.5">DHC</text>
</svg>
<div class="a" style="left:145px;top:23px;font-size:27px;font-weight:bold;color:#fff;letter-spacing:4.9px;line-height:34px;-webkit-text-stroke:0.9px #fff">东华软件股份公司</div>
<div class="a" style="left:148px;top:56px;font-size:15.5px;font-style:italic;color:#fff;line-height:17px;-webkit-text-stroke:0.7px #fff;letter-spacing:0.1px">DHC Software Co., Ltd.</div>
<div class="a nav" style="left:614px;color:#fff">征信系统</div>
<div class="a nav" style="left:728px;color:#f7a21b">反洗钱系统</div>
<div class="a nav" style="left:860px;color:#fff">名单管理系统</div>
<div class="a nav" style="left:1011px;color:#fff">征信监管</div>
<div class="a nav" style="left:1124px;color:#fff">金融大数据</div>
<div class="a nav" style="left:1256px;color:#fff">更多</div>
<svg class="a" style="left:1302px;top:28px" width="11" height="8"><path d="M0 0H10L5 7Z" fill="#fff"/></svg>
<svg class="a" style="left:1383px;top:12px" width="36" height="36"><circle cx="17.8" cy="17.5" r="17.5" fill="#fff"/><ellipse cx="18" cy="16.5" rx="6.5" ry="8.3" fill="#3476c8"/><path d="M14.5 22C13.5 26 11 27 7.5 28.5L6.5 36H29.5L28.5 28.5C25 27 22.5 26 21.5 22Z" fill="#3476c8"/></svg>
<div class="a" style="left:1426px;top:21px;font-size:17px;color:#fff;line-height:22px;-webkit-text-stroke:0.6px #fff">靳松 | 高级工程师</div>
<svg class="a" style="left:1566px;top:28px" width="10" height="7"><path d="M0 0H9L4.5 6Z" fill="#fff"/></svg>
<svg class="a" style="left:1614px;top:15px" width="24" height="28"><rect x="2" y="4" width="20" height="23" rx="2" fill="#fff"/><rect x="7" y="1" width="10" height="5" rx="1.5" fill="#fff" stroke="#3476c8" stroke-width="1"/><path d="M6 11H18M6 15H18M6 19H18M6 23H18" stroke="#3476c8" stroke-width="1.6"/></svg>
<svg class="a" style="left:1674px;top:16px" width="26" height="28"><path d="M13 2C8 2 5 6 5 11V17L2 21V22H24V21L21 17V11C21 6 18 2 13 2Z" fill="#fff"/><path d="M10 23A3 3 0 0 0 16 23Z" fill="#fff"/></svg>
<svg class="a" style="left:1738px;top:16px" width="32" height="28"><path d="M17.5 8V4.5A2.5 2.5 0 0 0 15 2H5A2.5 2.5 0 0 0 2.5 4.5V22.5A2.5 2.5 0 0 0 5 25H15A2.5 2.5 0 0 0 17.5 22.5V19" fill="none" stroke="#fff" stroke-width="3.2" stroke-linecap="round"/><path d="M10.5 13.5H21" stroke="#fff" stroke-width="4.2" stroke-linecap="round"/><path d="M20 7.5L28.5 13.5L20 19.5Z" fill="#fff" stroke="#fff" stroke-width="1.5" stroke-linejoin="round"/></svg>
<svg class="a" style="left:472px;top:59px" width="22" height="22"><circle cx="11" cy="11" r="10.5" fill="#eceef1"/><path d="M14 6V16L7 11Z" fill="#3476c8"/></svg>
<div class="a tsep" style="left:517px"></div>
<div class="a" style="left:773px;top:54px;width:203px;height:31px;background:#ededed;border-radius:3px"></div>
<div class="a tab" style="left:542px">客户补录</div><div class="a tx" style="left:622px">×</div>
<div class="a tsep" style="left:643px"></div>
<div class="a tab" style="left:664px">大额交易</div><div class="a tx" style="left:749px">×</div>
<div class="a tsep" style="left:768px"></div>
<div class="a tab" style="left:793px">个人用户属性管理</div><div class="a tx" style="left:953px">×</div>
<div class="a tab" style="left:1000px">客户补录</div><div class="a tx" style="left:1080px">×</div>
<div class="a tsep" style="left:1100px"></div>
<div class="a tab" style="left:1122px">大额交易</div><div class="a tx" style="left:1207px">×</div>
<div class="a tsep" style="left:1232px"></div>
<div class="a tab" style="left:1251px">个人用户属性管理</div><div class="a tx" style="left:1412px">×</div>
<div class="a tsep" style="left:1438px"></div>
<div class="a tab" style="left:1458px">大额交易</div><div class="a tx" style="left:1543px">×</div>
<div class="a tsep" style="left:1566px"></div>
<div class="a tab" style="left:1587px">大额交易</div><div class="a tx" style="left:1671px">×</div>
<div class="a tsep" style="left:1695px"></div>
<div class="a tab" style="left:1715px">个</div>
<svg class="a" style="left:1733px;top:58px" width="24" height="24"><circle cx="12" cy="12" r="11.5" fill="#3476c8"/><path d="M9 6.5V17.5L17 12Z" fill="#fff"/></svg>
<div class="a" style="left:1457px;top:523px;width:312px;height:416px;background:#fff;border-radius:0 0 8px 8px;box-shadow:0 2px 8px rgba(0,0,0,0.12)"></div>
<div class="a" style="left:1457px;top:523px;width:312px;height:50px;background:#3476c8;border-radius:6px 6px 0 0"></div>
<svg class="a" style="left:1735px;top:514px" width="16" height="10"><path d="M0 10L8 1L16 10Z" fill="#3476c8"/></svg>
<div class="a" style="left:1543px;top:535px;font-size:19.5px;font-weight:bold;color:#fff;line-height:26px">添加信息列表项</div>
<div class="a" style="left:1457px;top:619px;width:312px;height:51px;background:#efefef"></div>
<div class="a cb" style="top:583px;background:#3476c8;border-color:#3476c8"></div>
<svg class="a" style="left:1480px;top:588px" width="16" height="14"><path d="M2 7L6 11L14 2" fill="none" stroke="#fff" stroke-width="2.4"/></svg>
<div class="a pi" style="left:1514px;top:583px;color:#444">大额特征</div>
<div class="a cb" style="top:632px;background:#f2f2f2"></div>
<div class="a pi" style="left:1514px;top:632px;color:#444">报告校验状态</div>
<div class="a cb" style="top:682px;"></div>
<div class="a pi" style="left:1514px;top:682px;color:#c0c0c0">报告日期</div>
<div class="a cb" style="top:731px;"></div>
<div class="a pi" style="left:1514px;top:731px;color:#444">状态</div>
<div class="a cb" style="top:781px;"></div>
<div class="a pi" style="left:1514px;top:781px;color:#444">证件号码</div>
<div class="a psep" style="top:718px"></div>
<div class="a psep" style="top:768px"></div>
<div class="a psep" style="top:817px"></div>
<div class="a" style="left:1486px;top:865px;width:106px;height:47px;border-radius:5px;background:#f7f7f7;border:1px solid #e6e6e6;font-size:20px;color:#888;line-height:45px;text-align:center">取消</div>
<div class="a" style="left:1635px;top:865px;width:106px;height:47px;border-radius:5px;background:#3476c8;font-size:20px;color:#fff;line-height:47px;text-align:center;-webkit-text-stroke:0.7px #fff">确认</div>
<div class="a" style="left:1716px;top:587px;width:52px;height:52px;border-radius:26px;background:rgba(165,226,250,0.8)"></div>
<div class="a" style="left:1728px;top:599px;width:28px;height:28px;border-radius:14px;background:#1fa9ef;color:#fff;font-size:17px;line-height:28px;text-align:center">2</div>
<div class="a" style="left:1775.5px;top:626px;width:5.5px;height:31px;border-radius:3px;background:#cfcfcf"></div>
</body></html>
